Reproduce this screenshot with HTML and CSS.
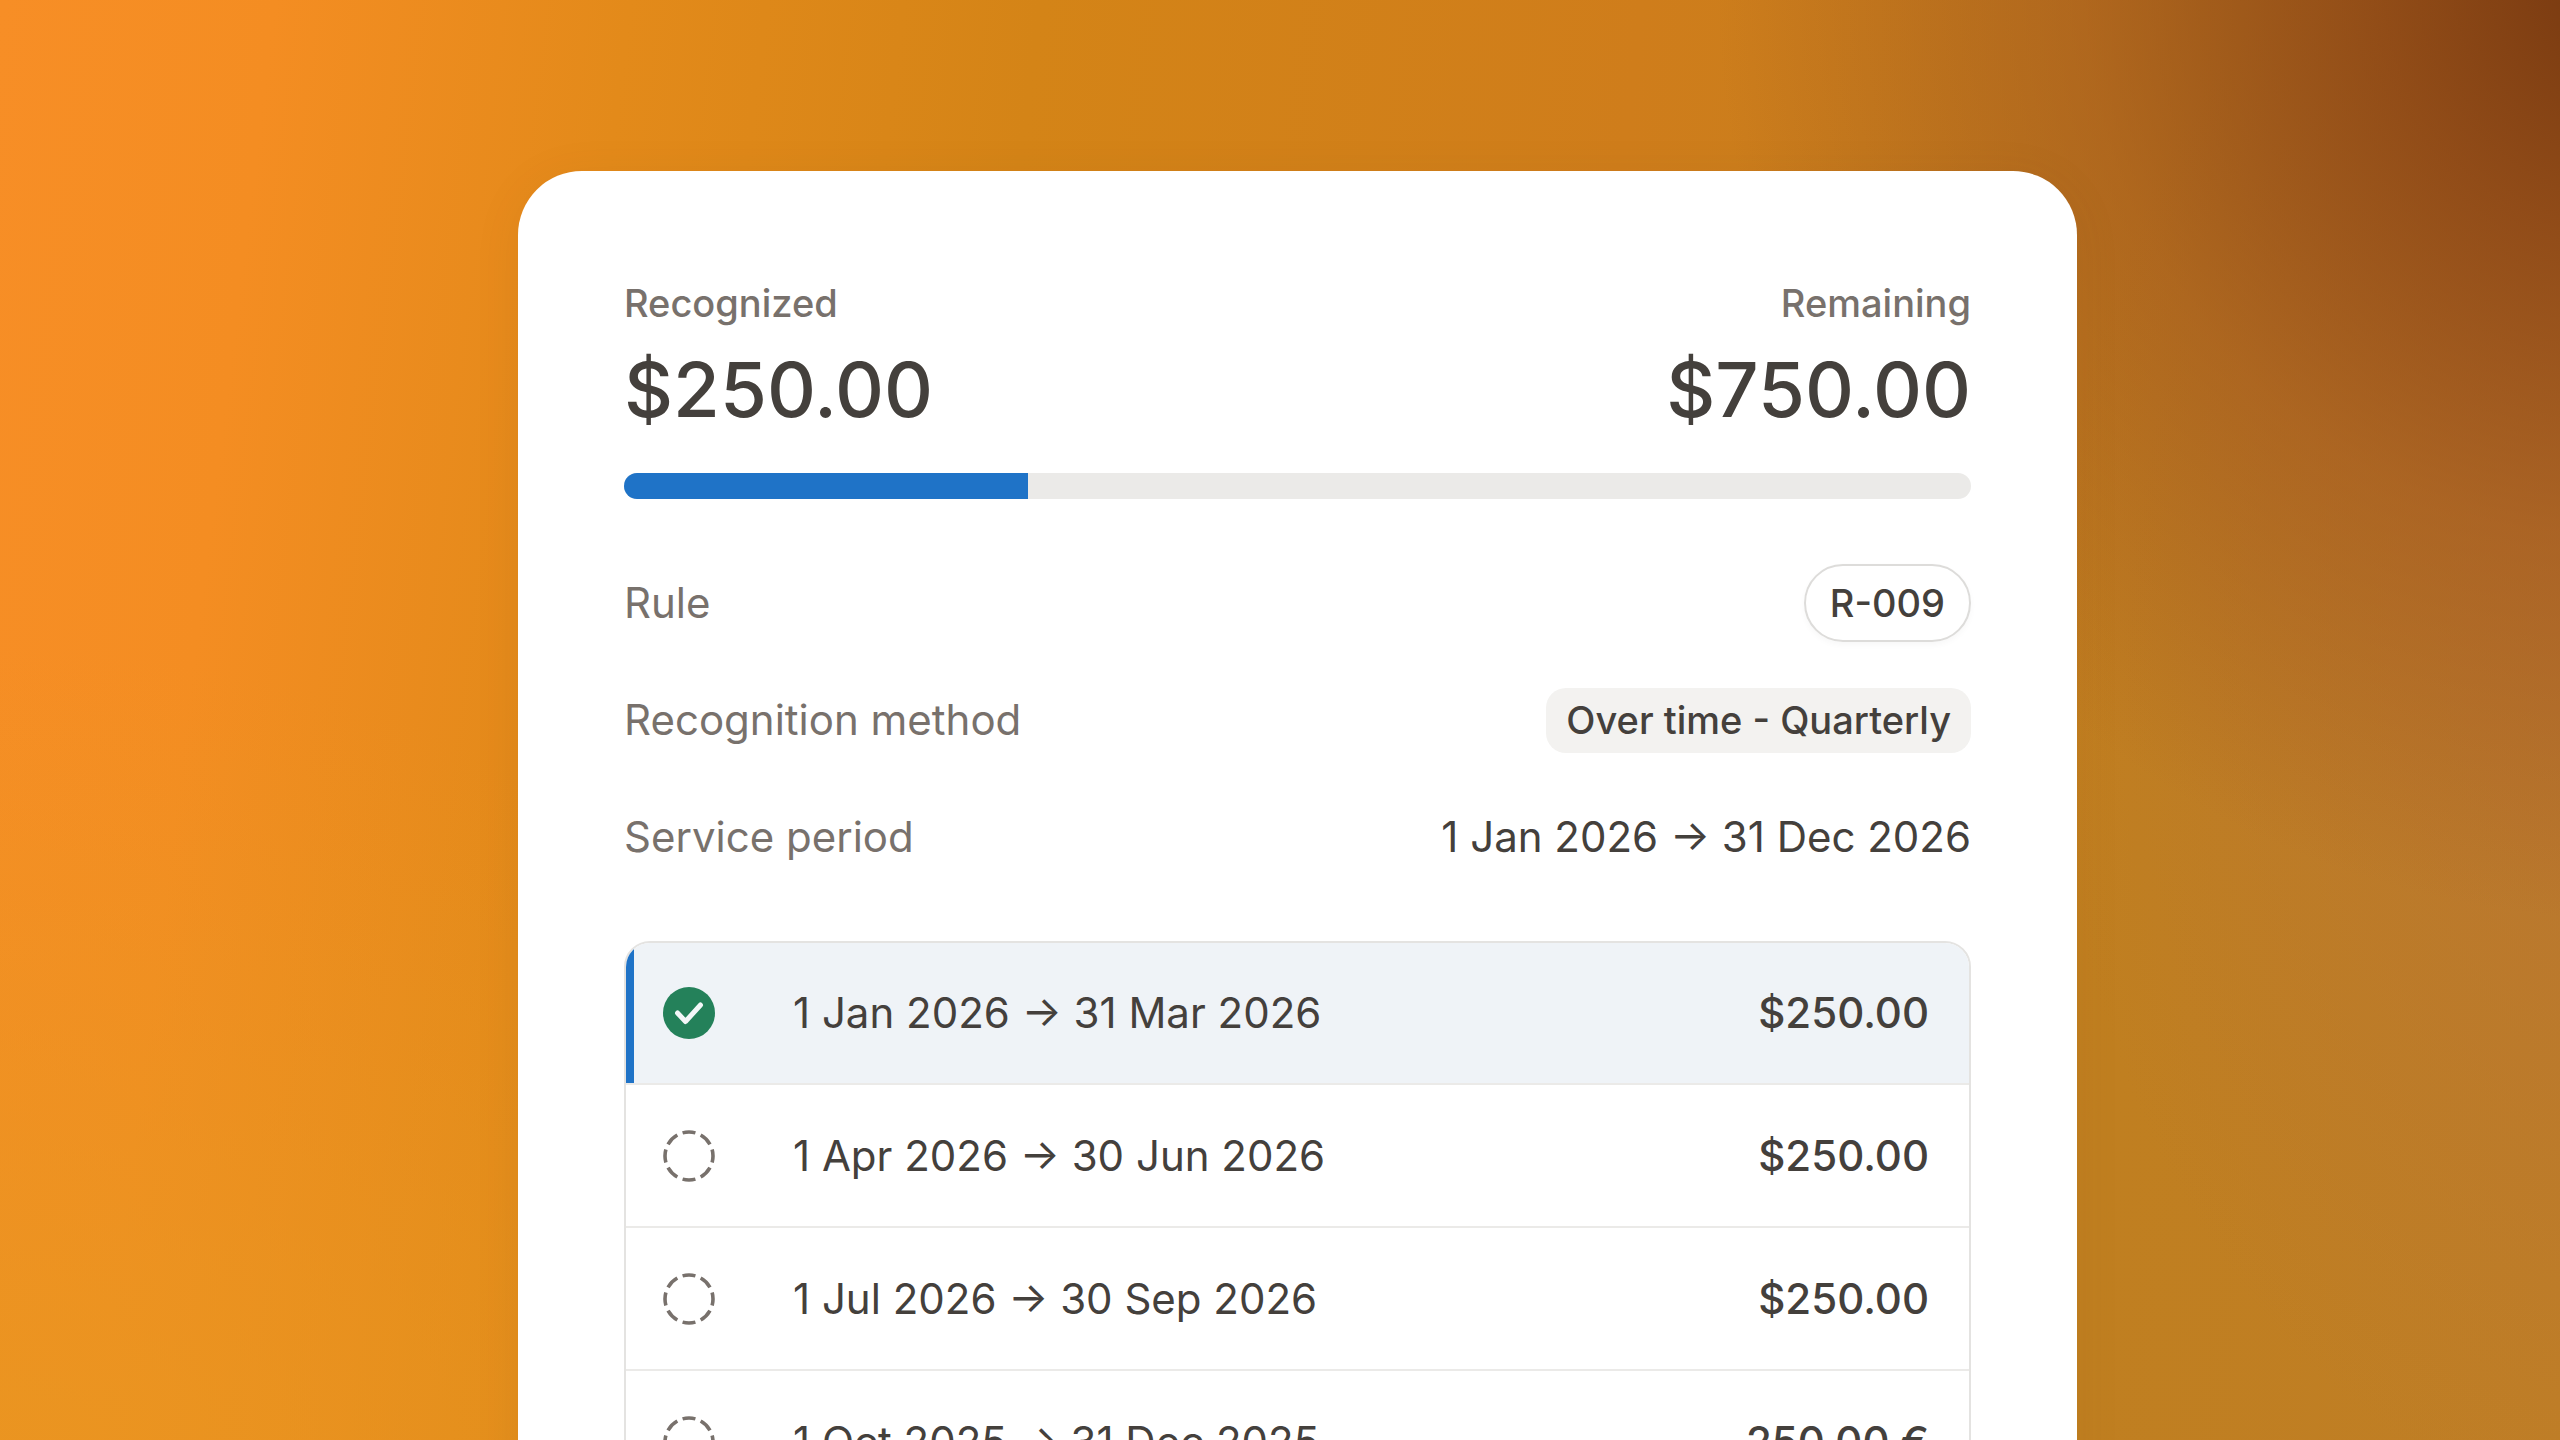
FILE: index.html
```
<!DOCTYPE html>
<html lang="en">
<head>
  <meta charset="UTF-8">
  <meta name="viewport" content="width=device-width, initial-scale=1.0">
  <title>Revenue recognition</title>
  <link rel="stylesheet" href="styles.css">
</head>
<body>
  <!-- Status icons used by the schedule rows -->
  <svg class="sprite" aria-hidden="true">
    <symbol id="icon-done" viewBox="0 0 52 52">
      <circle cx="26" cy="26" r="26" fill="#24815a"/>
      <path d="M14.5 26l8 8.5L37.500 18" fill="none" stroke="#f3f7f8" stroke-width="5" stroke-linecap="round" stroke-linejoin="round"/>
    </symbol>
    <symbol id="icon-pending" viewBox="0 0 52 52">
      <circle cx="26" cy="26" r="24" fill="none" stroke="#78716c" stroke-width="3.600" pathLength="80" stroke-dasharray="7 3" stroke-dashoffset="3.500"/>
    </symbol>
  </svg>

  <main class="card">
    <div class="totals">
      <div class="total">
        <span class="total-label">Recognized</span>
        <span class="total-amount">$250.00</span>
      </div>
      <div class="total total-right">
        <span class="total-label">Remaining</span>
        <span class="total-amount">$750.00</span>
      </div>
    </div>

    <progress class="bar" value="30" max="100" aria-label="Recognized revenue"></progress>

    <dl class="details">
      <div class="detail">
        <dt>Rule</dt>
        <dd><a class="pill" href="#">R-009</a></dd>
      </div>
      <div class="detail">
        <dt>Recognition method</dt>
        <dd><span class="tag">Over time - Quarterly</span></dd>
      </div>
      <div class="detail">
        <dt>Service period</dt>
        <dd>1 Jan 2026 → 31 Dec 2026</dd>
      </div>
    </dl>

    <div class="schedule">
      <table>
        <tbody>
          <tr class="current">
            <td class="status"><svg class="icon" role="img" aria-label="Recognized"><use href="#icon-done"/></svg></td>
            <td class="period">1 Jan 2026 → 31 Mar 2026</td>
            <td class="amount">$250.00</td>
          </tr>
          <tr>
            <td class="status"><svg class="icon" role="img" aria-label="Pending"><use href="#icon-pending"/></svg></td>
            <td class="period">1 Apr 2026 → 30 Jun 2026</td>
            <td class="amount">$250.00</td>
          </tr>
          <tr>
            <td class="status"><svg class="icon" role="img" aria-label="Pending"><use href="#icon-pending"/></svg></td>
            <td class="period">1 Jul 2026 → 30 Sep 2026</td>
            <td class="amount">$250.00</td>
          </tr>
          <tr>
            <td class="status"><svg class="icon" role="img" aria-label="Pending"><use href="#icon-pending"/></svg></td>
            <td class="period">1 Oct 2025 → 31 Dec 2025</td>
            <td class="amount">250.00 €</td>
          </tr>
        </tbody>
      </table>
    </div>
  </main>
</body>
</html>
```

FILE: styles.css
```
* {
  box-sizing: border-box;
}

body {
  margin: 0;
  height: 100vh;
  overflow: hidden;
  font-family: Inter, "Liberation Sans", sans-serif;
  font-size: 42px;
  line-height: 50px;
  color: #44403c;
  background:
    radial-gradient(ellipse 36% 66% at 103% -2%, #74360f 0%, rgba(134, 64, 20, 0.8) 28%, rgba(156, 80, 28, 0.5) 60%, rgba(190, 110, 30, 0) 100%),
    radial-gradient(ellipse 24% 60% at 104% 46%, rgba(182, 116, 52, 0.8), rgba(182, 116, 52, 0) 100%),
    radial-gradient(ellipse 40% 60% at 0% 105%, rgba(232, 150, 32, 0.9), rgba(232, 150, 32, 0) 100%),
    linear-gradient(97deg, #f78e26 0%, #f48d22 10%, #e38a1a 23%, #d48417 38%, #cf7d1b 60%, #c07f20 82%, #bf7e26 100%);
}

.sprite {
  position: absolute;
  width: 0;
  height: 0;
}

.card {
  width: 60.9%;
  margin: 171px 0 0 518px;
  padding: 106px;
  background-color: #fff;
  border-radius: 64px 64px 0 0;
  box-shadow: 0 8px 48px rgba(120, 60, 0, 0.08);
}

.totals {
  display: flex;
  justify-content: space-between;
}

.total {
  display: flex;
  flex-direction: column;
}

.total-right {
  text-align: right;
}

.total-label {
  font-size: 38px;
  font-weight: 500;
  line-height: 52px;
  color: #78716c;
}

.total-amount {
  font-size: 76px;
  font-weight: 500;
  line-height: 120px;
}

/* Progress bar */
.bar {
  display: block;
  width: 100%;
  height: 26px;
  margin-top: 24px;
  appearance: none;
  border: none;
  border-radius: 13px;
  overflow: hidden;
}

.bar::-webkit-progress-bar {
  background-color: #ebeae8;
}

.bar::-webkit-progress-value {
  background-color: #1f73c7;
}

/* Rule, method and period */
.details {
  display: flex;
  flex-direction: column;
  gap: 39px;
  margin: 65px 0 0;
}

.detail {
  display: flex;
  align-items: center;
  justify-content: space-between;
  height: 78px;
}

.detail dt {
  color: #78716c;
}

.detail dd {
  margin: 0;
}

.pill,
.tag {
  display: flex;
  align-items: center;
  font-size: 38px;
  font-weight: 500;
}

.pill {
  height: 78px;
  padding: 0 24px;
  color: inherit;
  text-decoration: none;
  border: 2px solid #dddcda;
  border-radius: 39px;
  box-shadow: 0 3px 6px rgba(0, 0, 0, 0.03);
}

.tag {
  height: 65px;
  padding: 0 20px;
  background-color: #f3f2f0;
  border-radius: 20px;
}

/* Schedule */
.schedule {
  margin-top: 65px;
  border: 2px solid #e4e3e1;
  border-radius: 26px;
  overflow: hidden;
}

.schedule table {
  width: 100%;
  border-spacing: 0;
}

.schedule td {
  height: 140px;
  padding: 0;
}

.schedule tr + tr td {
  height: 143px;
  border-top: 2px solid #ebeae8;
}

.schedule .status {
  width: 167px;
  padding-left: 37px;
}

.schedule .amount {
  padding-right: 40px;
  font-weight: 500;
  text-align: right;
}

.current {
  background-color: #eff3f7;
}

.current .status {
  box-shadow: inset 8px 0 #1f73c7;
}

.icon {
  display: block;
  width: 52px;
  height: 52px;
}
```
